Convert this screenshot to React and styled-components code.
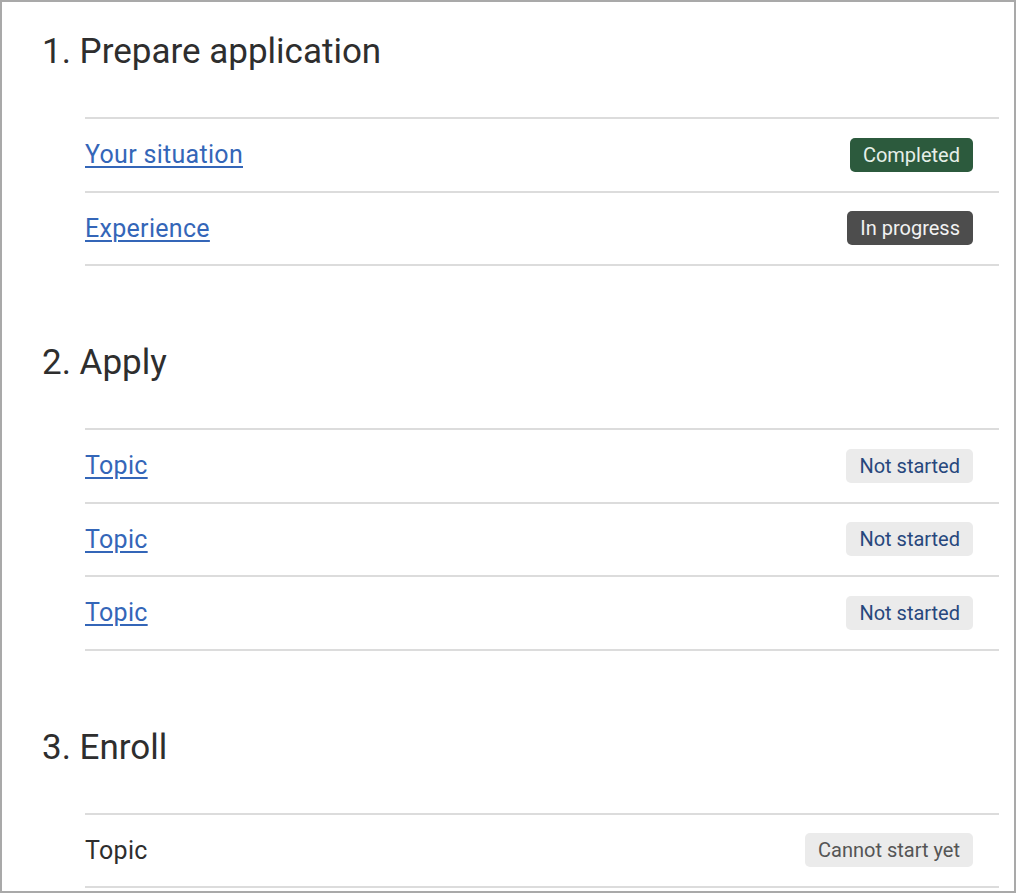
import styled, { createGlobalStyle } from 'styled-components';

const GlobalStyle = createGlobalStyle`
  body {
    margin: 0;
    background: #ffffff;
    font-family: Roboto, "Noto Sans", Arial, sans-serif;
  }
`;

const Frame = styled.div`
  box-sizing: border-box;
  width: 1016px;
  height: 893px;
  border: 2px solid #a9a9a9;
  padding: 29px 15px 0 40px;
  overflow: hidden;
`;

const Section = styled.section`
  & + & {
    margin-top: 76px;
  }
`;

const Heading = styled.h2`
  margin: 0 0 45px;
  font-size: 35px;
  line-height: 41px;
  font-weight: 400;
  color: #2e2e2e;
`;

const TaskList = styled.ul`
  list-style: none;
  margin: 0 0 0 43px;
  padding: 0;
  border-bottom: 2px solid #dcdcdc;
`;

const Task = styled.li`
  display: flex;
  align-items: center;
  justify-content: space-between;
  height: 71.5px;
  border-top: 2px solid #dcdcdc;
  padding-right: 26px;
`;

const TaskLink = styled.a`
  font-size: 25px;
  letter-spacing: 0.3px;
  color: #3466b8;
  text-decoration: underline;
  text-underline-offset: 3px;
  text-decoration-thickness: 2px;
  cursor: pointer;
`;

const TaskName = styled.span`
  font-size: 25px;
  letter-spacing: 0.3px;
  color: #2e2e2e;
`;

const tagColors = {
  completed: { bg: '#2c5a3d', fg: '#e6efe8' },
  progress: { bg: '#4d4d4d', fg: '#f2f2f2' },
  todo: { bg: '#ebebeb', fg: '#27477d' },
  blocked: { bg: '#ebebeb', fg: '#555555' },
};

const Tag = styled.span`
  display: inline-flex;
  align-items: center;
  height: 34px;
  padding: 0 13px;
  border-radius: 5px;
  font-size: 20px;
  background: ${(p) => tagColors[p.$kind].bg};
  color: ${(p) => tagColors[p.$kind].fg};
`;

const sections = [
  {
    title: '1. Prepare application',
    tasks: [
      { name: 'Your situation', link: true, status: 'Completed', kind: 'completed' },
      { name: 'Experience', link: true, status: 'In progress', kind: 'progress' },
    ],
  },
  {
    title: '2. Apply',
    tasks: [
      { name: 'Topic', link: true, status: 'Not started', kind: 'todo' },
      { name: 'Topic', link: true, status: 'Not started', kind: 'todo' },
      { name: 'Topic', link: true, status: 'Not started', kind: 'todo' },
    ],
  },
  {
    title: '3. Enroll',
    tasks: [{ name: 'Topic', link: false, status: 'Cannot start yet', kind: 'blocked' }],
  },
];

const App = () => {
  return (
    <>
      <GlobalStyle />
      <Frame>
        {sections.map((section) => (
          <Section key={section.title}>
            <Heading>{section.title}</Heading>
            <TaskList>
              {section.tasks.map((task, i) => (
                <Task key={i}>
                  {task.link ? (
                    <TaskLink>{task.name}</TaskLink>
                  ) : (
                    <TaskName>{task.name}</TaskName>
                  )}
                  <Tag $kind={task.kind}>{task.status}</Tag>
                </Task>
              ))}
            </TaskList>
          </Section>
        ))}
      </Frame>
    </>
  );
};

export default App;
